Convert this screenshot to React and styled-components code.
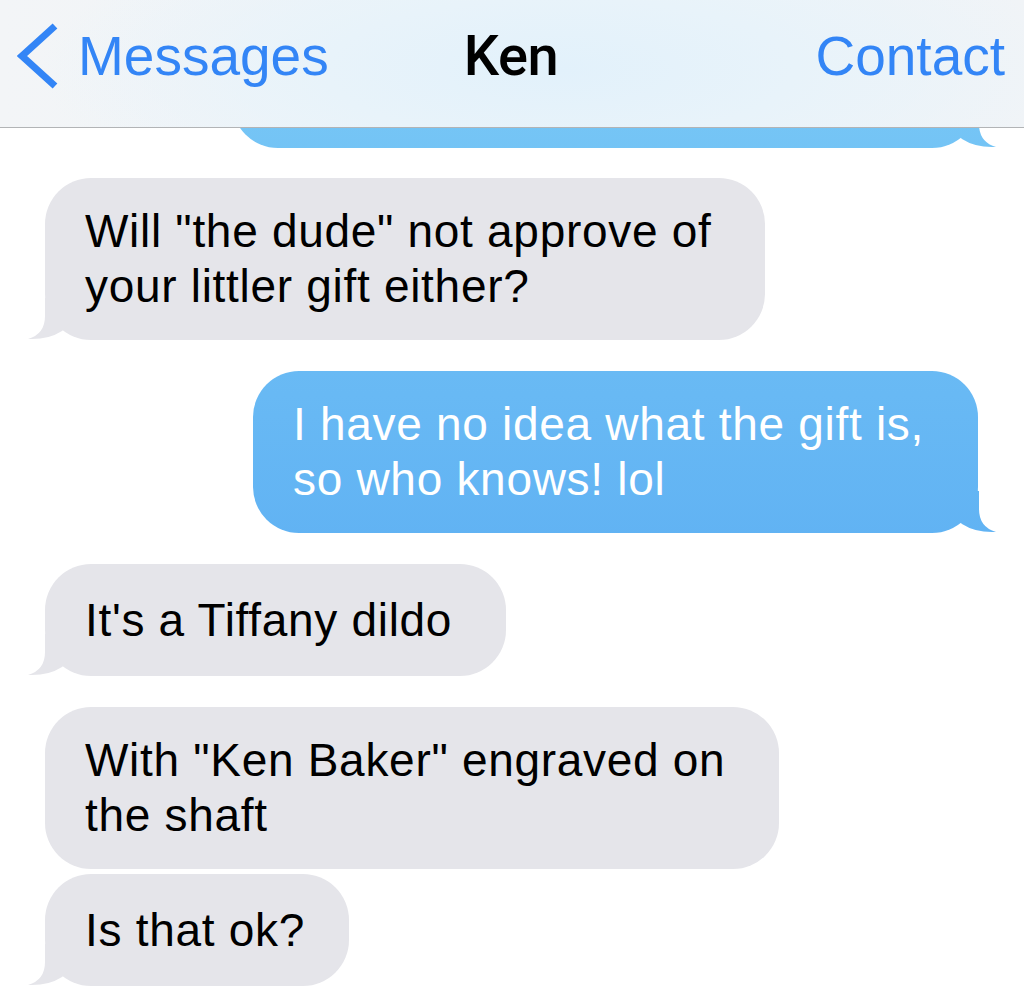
import styled, { createGlobalStyle } from "styled-components";

const GlobalStyle = createGlobalStyle`
  html, body {
    margin: 0;
    padding: 0;
    background: #fff;
    overflow: hidden;
  }
  body {
    font-family: "Liberation Sans", Arial, sans-serif;
    -webkit-font-smoothing: antialiased;
  }
`;

const messages = [
  { id: 0, from: "me", hidden: true, width: 746, gap: -142 },
  { id: 1, from: "them", lines: ['Will "the dude" not approve of', "your littler gift either?"], tail: true, gap: 30 },
  { id: 2, from: "me", lines: ["I have no idea what the gift is,", "so who knows! lol"], tail: true, gap: 31 },
  { id: 3, from: "them", lines: ["It's a Tiffany dildo"], tail: true, gap: 31 },
  { id: 4, from: "them", lines: ['With "Ken Baker" engraved on', "the shaft"], tail: false, gap: 31 },
  { id: 5, from: "them", lines: ["Is that ok?"], tail: true, gap: 5, pad: 44 },
];

export default function App() {
  return (
    <Screen>
      <GlobalStyle />
      <NavBar>
        <BackLink>
          <svg width="44" height="68" viewBox="0 0 44 68" fill="none">
            <polyline points="38,4 5,34 38,64" stroke="#3385f6" strokeWidth="7" strokeLinecap="butt" strokeLinejoin="miter" />
          </svg>
          <NavLabel>Messages</NavLabel>
        </BackLink>
        <Title>Ken</Title>
        <NavAction>Contact</NavAction>
      </NavBar>

      <Thread>
        {messages.map((m) => (
          <Row key={m.id} $from={m.from} $gap={m.gap}>
            <Bubble
              $from={m.from}
              $pad={m.pad}
              style={m.hidden ? { width: m.width } : undefined}
            >
              {m.hidden ? (
                <Spacer />
              ) : (
                <Text>
                  {m.lines.map((line, i) => (
                    <span key={i}>
                      {line}
                      {i < m.lines.length - 1 && <br />}
                    </span>
                  ))}
                </Text>
              )}
              {(m.tail || m.hidden) && <Tail $from={m.from} />}
            </Bubble>
          </Row>
        ))}
      </Thread>
    </Screen>
  );
}

const Screen = styled.div`
  width: 1024px;
  height: 997px;
  display: flex;
  flex-direction: column;
  overflow: hidden;
  background: #fff;
`;

const NavBar = styled.header`
  position: relative;
  z-index: 2;
  flex: 0 0 auto;
  height: 128px;
  box-sizing: border-box;
  padding: 28px 19px 0 17px;
  display: grid;
  grid-template-columns: 1fr auto 1fr;
  align-items: start;
  border-bottom: 1px solid #b2b4b6;
  background:
    radial-gradient(ellipse 520px 160px at 560px 70px, #e2f1fb 0%, #e8f3fa 45%, rgba(240, 245, 248, 0) 100%),
    linear-gradient(90deg, #f3f5f7 0%, #eef4f8 50%, #f1f4f7 100%);
`;

const BackLink = styled.div`
  display: flex;
  align-items: center;
  gap: 17px;
  height: 56px;
  color: #3385f6;
`;

const NavLabel = styled.span`
  font-family: "Liberation Sans", Arial, sans-serif;
  font-size: 55px;
  line-height: 56px;
  color: #3385f6;
`;

const Title = styled.div`
  font-family: Roboto, "Liberation Sans", sans-serif;
  font-weight: 500;
  font-size: 56px;
  line-height: 56px;
  color: #000;
  letter-spacing: -0.5px;
`;

const NavAction = styled(NavLabel)`
  justify-self: end;
`;

const Thread = styled.main`
  flex: 1 1 auto;
  overflow: hidden;
  display: flex;
  flex-direction: column;
  padding: 0 46px 0 45px;
`;

const Row = styled.div`
  display: flex;
  justify-content: ${(p) => (p.$from === "me" ? "flex-end" : "flex-start")};
  margin-top: ${(p) => p.$gap}px;
`;

const Bubble = styled.div`
  position: relative;
  box-sizing: border-box;
  min-height: 112px;
  display: flex;
  align-items: center;
  padding: 26px ${(p) => p.$pad ?? 54}px 26px 40px;
  border-radius: 46px;
  color: ${(p) => (p.$from === "me" ? "#ffffff" : "#000000")};
  background: ${(p) =>
    p.$from === "me"
      ? "linear-gradient(180deg, #7bcaf6 0%, #4b9ff1 100%) fixed"
      : "#e5e5ea"};
`;

const Spacer = styled.div`
  height: 110px;
`;

const Text = styled.p`
  margin: 0;
  font-family: "Liberation Sans", Arial, sans-serif;
  font-size: 46px;
  line-height: 55px;
  letter-spacing: 0.7px;
  white-space: nowrap;
`;

const Tail = styled.span`
  position: absolute;
  bottom: 0;
  width: 50px;
  height: 46px;
  background: inherit;
  ${(p) =>
    p.$from === "me"
      ? `right: -18px; clip-path: path("M33,4 L33,22 Q33,40 50,45 Q30,46 16,37 L3,24 L18,4 Z");`
      : `left: -17px; clip-path: path("M17,4 L17,22 Q17,40 0,45 Q20,46 34,37 L47,24 L32,4 Z");`}
`;
